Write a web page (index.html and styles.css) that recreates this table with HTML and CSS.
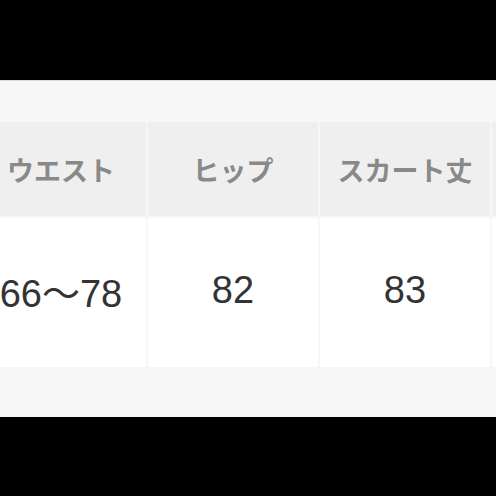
FILE: index.html
```html
<!DOCTYPE html>
<html lang="ja">
<head>
<meta charset="utf-8">
<link rel="stylesheet" href="styles.css">
</head>
<body>
<div class="band"></div>
<div class="panel">
  <div class="table">
    <div class="row head">
      <div class="cell">ウエスト</div>
      <div class="cell">ヒップ</div>
      <div class="cell">スカート丈</div>
      <div class="cell"></div>
    </div>
    <div class="row body">
      <div class="cell">66〜78</div>
      <div class="cell">82</div>
      <div class="cell">83</div>
      <div class="cell"></div>
    </div>
  </div>
</div>
<div class="band bottom"></div>
</body>
</html>
```
FILE: styles.css
```css
html, body {
  margin: 0;
  padding: 0;
  background: #000;
  width: 496px;
  height: 496px;
  overflow: hidden;
}
.band {
  height: 80px;
  background: #000;
}
.band.bottom {
  height: 79px;
}
.panel {
  height: 337px;
  background: #f7f7f7;
  border-top: 1px solid #d9d9d9;
  box-sizing: border-box;
  padding-top: 41px;
  overflow: hidden;
}
.table {
  display: flex;
  flex-direction: column;
  gap: 2px;
  margin-left: -24px;
}
.row {
  display: flex;
  gap: 2px;
}
.cell {
  flex: 0 0 170px;
  display: flex;
  align-items: center;
  justify-content: center;
}
.head .cell {
  height: 94px;
  background: #efefef;
  color: #898989;
  font-family: "Noto Sans CJK JP", sans-serif;
  font-weight: 700;
  font-size: 27px;
}
.body .cell {
  height: 149px;
  padding-bottom: 4px;
  box-sizing: border-box;
  background: #ffffff;
  color: #333333;
  font-family: "Liberation Sans", "Noto Sans CJK JP", sans-serif;
  font-size: 38px;
}
```
